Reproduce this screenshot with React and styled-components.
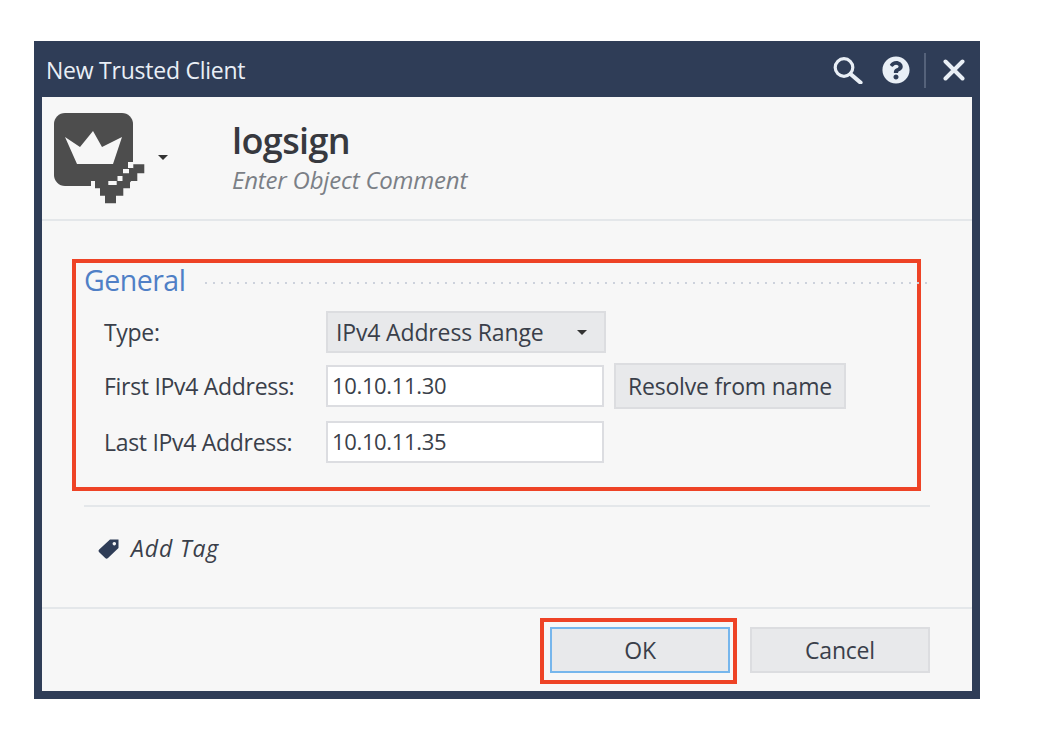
import React from 'react'
import styled, { createGlobalStyle } from 'styled-components'
import { FaQuestionCircle } from 'react-icons/fa'

const Global = createGlobalStyle`
  html, body {
    margin: 0;
    background: #fff;
  }
  * {
    box-sizing: border-box;
  }
`

const Page = styled.div`
  width: 1042px;
  height: 750px;
  padding: 41px 0 0 34px;
  font-family: 'Open Sans', 'Noto Sans', sans-serif;
  color: #3a3f4a;
`

const Window = styled.div`
  width: 946px;
  height: 658px;
  display: flex;
  flex-direction: column;
  background: #2f3d57;
  padding: 0 8px 8px;
`

const TitleBar = styled.div`
  height: 56px;
  flex: none;
  display: flex;
  align-items: center;
  padding: 2px 7px 0 4px;
  color: #e9eff6;
`

const Title = styled.div`
  flex: 1;
  font-size: 23px;
  letter-spacing: -0.24px;
`

const TitleIcon = styled.button`
  border: 0;
  padding: 0;
  background: none;
  color: #e9eff6;
  display: flex;
  margin-left: ${p => p.gap}px;
`

const Separator = styled.div`
  width: 2px;
  height: 35px;
  margin-left: 14px;
  background: #55627a;
`

const Body = styled.div`
  flex: 1;
  display: flex;
  flex-direction: column;
  background: #f7f7f7;
`

const Header = styled.div`
  height: 124px;
  flex: none;
  display: flex;
  padding: 16px 0 0 12px;
  border-bottom: 2px solid #e4e7ea;
`

const ObjectIcon = styled.div`
  width: 91px;
  height: 92px;
  flex: none;
`

const Caret = styled.span`
  width: 0;
  height: 0;
  flex: none;
  border-left: 5px solid transparent;
  border-right: 5px solid transparent;
  border-top: 5px solid ${p => p.color || '#333'};
`

const IconCaret = styled(Caret)`
  margin: 42px 0 0 13px;
`

const Names = styled.div`
  margin-left: 64px;
`

const ObjectName = styled.div`
  font-size: 36px;
  line-height: 44px;
  margin-top: 6px;
  font-weight: 600;
  color: #37393f;
  letter-spacing: -0.6px;
`

const ObjectComment = styled.div`
  font-size: 24px;
  line-height: 30px;
  margin-top: 2px;
  font-style: italic;
  color: #7b7f86;
  letter-spacing: -0.2px;
`

const GeneralBox = styled.div`
  width: 849px;
  height: 232px;
  flex: none;
  margin: 38px 0 0 30px;
  border: 4px solid #ee4326;
  padding: 0 0 0 9px;
`

const SectionHead = styled.div`
  display: flex;
  align-items: center;
  height: 34px;
  margin-left: -1px;
`

const SectionTitle = styled.div`
  font-size: 28.500px;
  color: #4f7fc6;
  letter-spacing: -0.5px;
`

const DottedLine = styled.div`
  flex: 1;
  height: 2px;
  margin: 6px -14px 0 20px;
  background: repeating-linear-gradient(90deg, #cdd2dc 0 2px, transparent 2px 8px);
`

const FormRow = styled.div`
  display: flex;
  align-items: ${p => p.center ? 'center' : 'flex-start'};
  margin-top: ${p => p.top}px;
  padding-left: 19px;
`

const Label = styled.div`
  width: 222px;
  flex: none;
  font-size: 23px;
  line-height: 42px;
  letter-spacing: -0.3px;
`

const Select = styled.div`
  width: 280px;
  height: 42px;
  display: flex;
  align-items: center;
  justify-content: space-between;
  padding: 0 17px 0 8px;
  background: #e8e9eb;
  border: 2px solid #dcdde0;
  font-size: 23px;
  letter-spacing: -0.15px;
`

const Input = styled.input`
  width: 278px;
  height: 42px;
  padding: 0 0 2px 4px;
  background: #fff;
  border: 2px solid #dcdde1;
  font: inherit;
  font-size: 22px;
  letter-spacing: -0.35px;
  color: #3a3f4a;
  outline: none;
`

const Button = styled.button`
  display: block;
  padding: 0;
  font: inherit;
  font-size: 23px;
  letter-spacing: -0.2px;
  color: #3a3f4a;
  background: #e8e9eb;
  border: 2px solid ${p => p.primary ? '#76b6ec' : '#dcdde0'};
  width: ${p => p.width}px;
  height: ${p => p.height}px;
`

const ResolveButton = styled(Button)`
  margin-left: 10px;
`

const Divider = styled.div`
  height: 2px;
  flex: none;
  margin: 14px 42px 0 42px;
  background: #e4e7ea;
`

const TagRow = styled.div`
  height: 102px;
  flex: none;
  display: flex;
  align-items: center;
  padding: 0 0 18px 56px;
  border-bottom: 2px solid #e4e7ea;
`

const AddTag = styled.div`
  margin-left: 11px;
  font-size: 23px;
  font-style: italic;
  letter-spacing: 0.9px;
`

const Footer = styled.div`
  flex: 1;
  display: flex;
  align-items: flex-start;
  padding: 9px 0 0 498px;
`

const OkFrame = styled.div`
  width: 197px;
  height: 66px;
  flex: none;
  border: 4px solid #ee4326;
  padding: 5px 0 0 6px;
`

const CancelButton = styled(Button)`
  margin: 9px 0 0 13px;
`

const SearchIcon = () => (
  <svg width="32" height="28" viewBox="0 0 32 28">
    <circle cx="12" cy="11.5" r="8.8" fill="none" stroke="currentColor" strokeWidth="3.2" />
    <path d="M18.5 18l10 8.5" stroke="currentColor" strokeWidth="4.2" strokeLinecap="round" />
  </svg>
)

const CloseIcon = () => (
  <svg width="22" height="22" viewBox="0 0 22 22">
    <path d="M2.5 2.5l17 17M19.5 2.5l-17 17" stroke="currentColor" strokeWidth="4" strokeLinecap="round" />
  </svg>
)

const TagIcon = () => (
  <svg width="22" height="21" viewBox="0 0 22 21">
    <path
      fillRule="evenodd"
      fill="#2f3d57"
      d="M12 1.5h8.500v8.500L10 20a2 2 0 0 1-2.800 0L1.200 14.200a2 2 0 0 1 0-2.800zM16.300 4a1.700 1.700 0 1 0 .01 0z"
    />
  </svg>
)

const checkPath = 'M90.300 51.300V60.300H83.300V68H76V75.300H69.300V82.700H62V90.300H51V82.700H46V75.300H41V68H54.300V72H62.700V68H68.300V60.300H76V55.300H79.300V51.300Z'

const TrustedIcon = () => (
  <svg width="91" height="92" viewBox="0 0 91 92">
    <rect width="79" height="73" rx="11" fill="#4d4d4d" />
    <path d="M11 24l15 10 13-16 9 16 20-10-9 27H23z" fill="#f7f7f7" />
    <path d={checkPath} fill="#4d4d4d" />
    <path d="M74 49h5v6h-5zM69 56h6v4.300h-6zM63.500 63h5v5h-5zM54.300 68h8.400v4h-8.400zM37 68h4v5h-4z" fill="#f7f7f7" />
  </svg>
)

export default function App () {
  return (
    <Page>
      <Global />
      <Window>
        <TitleBar>
          <Title>New Trusted Client</Title>
          <TitleIcon aria-label='search'><SearchIcon /></TitleIcon>
          <TitleIcon aria-label='help' gap={18}><FaQuestionCircle size={28} /></TitleIcon>
          <Separator />
          <TitleIcon aria-label='close' gap={17}><CloseIcon /></TitleIcon>
        </TitleBar>
        <Body>
          <Header>
            <ObjectIcon><TrustedIcon /></ObjectIcon>
            <IconCaret />
            <Names>
              <ObjectName>logsign</ObjectName>
              <ObjectComment>Enter Object Comment</ObjectComment>
            </Names>
          </Header>
          <GeneralBox>
            <SectionHead>
              <SectionTitle>General</SectionTitle>
              <DottedLine />
            </SectionHead>
            <FormRow top={14}>
              <Label>Type:</Label>
              <Select>IPv4 Address Range <Caret /></Select>
            </FormRow>
            <FormRow top={10} center>
              <Label>First IPv4 Address:</Label>
              <Input readOnly value='10.10.11.30' />
              <ResolveButton width={232} height={46}>Resolve from name</ResolveButton>
            </FormRow>
            <FormRow top={12}>
              <Label>Last IPv4 Address:</Label>
              <Input readOnly value='10.10.11.35' />
            </FormRow>
          </GeneralBox>
          <Divider />
          <TagRow>
            <TagIcon />
            <AddTag>Add Tag</AddTag>
          </TagRow>
          <Footer>
            <OkFrame>
              <Button primary width={180} height={46}>OK</Button>
            </OkFrame>
            <CancelButton width={180} height={46}>Cancel</CancelButton>
          </Footer>
        </Body>
      </Window>
    </Page>
  )
}
